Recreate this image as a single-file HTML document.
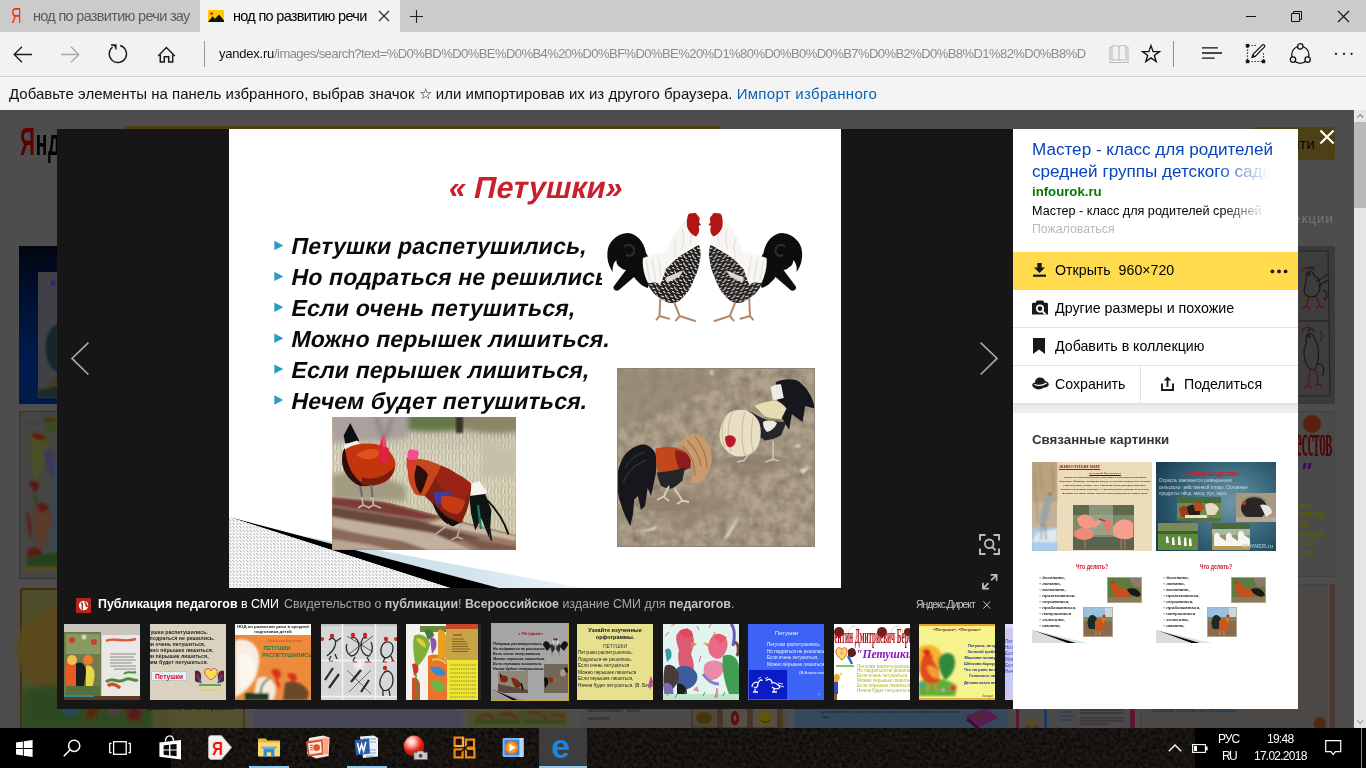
<!DOCTYPE html>
<html lang="ru">
<head>
<meta charset="utf-8">
<title>нод по развитию речи</title>
<style>
*{box-sizing:border-box;margin:0;padding:0}
html,body{width:1366px;height:768px;overflow:hidden;background:#4d4d4d}
body{position:relative;font-family:"Liberation Sans",sans-serif;color:#000}
.abs{position:absolute}
body>div,body>.t{will-change:transform}
.t{position:absolute;white-space:nowrap;line-height:1}
svg{position:absolute;overflow:visible}
/* ---------- browser chrome ---------- */
#tabbar{left:0;top:0;width:1366px;height:32px;background:#cbcbcb}
#tabactive{left:200px;top:0;width:200px;height:32px;background:#f2f2f2}
#navbar{left:0;top:32px;width:1366px;height:44px;background:#f2f2f2}
#favbar{left:0;top:76px;width:1366px;height:34px;background:#f4f4f4;border-top:1px solid #d2d2d2}
/* ---------- page ---------- */
#page{left:0;top:110px;width:1354px;height:618px;background:#4d4d4d;overflow:hidden}
#scroll{left:1354px;top:110px;width:12px;height:618px;background:#e6e6e6}
#thumb{left:1354px;top:122px;width:12px;height:86px;background:#bababa}
/* ---------- modal ---------- */
#modal{left:57px;top:129px;width:956px;height:580px;background:#161616}
#side{left:1013px;top:129px;width:285px;height:580px;background:#fff}
#slide{left:229px;top:129px;width:612px;height:459px;background:#fff;overflow:hidden}
.sk{transform:skewX(-12deg);transform-origin:0 24px}
.th{width:76px;height:76px;overflow:hidden}
.rel{width:120px;height:86px;background:#fff;overflow:hidden}
.bl{color:#3aa0c4;font-style:normal}
/* ---------- taskbar ---------- */
#taskbar{left:0;top:728px;width:1366px;height:40px;background:#16120f}
</style>
</head>
<body>
<!-- ================= BROWSER CHROME ================= -->
<div id="tabbar" class="abs"></div>
<div id="tabactive" class="abs"></div>
<div id="navbar" class="abs"></div>
<div id="favbar" class="abs"></div>
<!--CHROME_START-->
<!-- tab 1 -->
<div class="t" style="left:11px;top:5px;font-size:22px;color:#ff2a00;transform:scaleX(.66);transform-origin:0 0">Я</div>
<div class="t" id="tab1t" style="left:33px;top:9px;font-size:14.5px;color:#5a5a5a;letter-spacing:-.7px">нод по развитию речи зау</div>
<!-- tab 2 favicon -->
<svg style="left:208px;top:10px" width="16" height="12" viewBox="0 0 16 12"><rect width="16" height="12" fill="#ffcc00"/><path d="M0 12 L4.5 6.2 L7 8.8 L11 4.5 L16 10.5 V12Z" fill="#111"/><circle cx="3.6" cy="3.4" r="1.5" fill="#e8201a"/></svg>
<div class="t" id="tab2t" style="left:233px;top:9px;font-size:14.5px;color:#000;letter-spacing:-.7px">нод по развитию речи</div>
<svg style="left:379px;top:11px" width="10" height="10" viewBox="0 0 10 10"><path d="M0 0L10 10M10 0L0 10" stroke="#222" stroke-width="1.1" fill="none"/></svg>
<svg style="left:410px;top:10px" width="13" height="13" viewBox="0 0 13 13"><path d="M6.5 0V13M0 6.5H13" stroke="#222" stroke-width="1.1" fill="none"/></svg>
<!-- window controls -->
<svg style="left:1246px;top:16px" width="10" height="2" viewBox="0 0 10 2"><path d="M0 .5H10" stroke="#111" stroke-width="1"/></svg>
<svg style="left:1291px;top:11px" width="11" height="11" viewBox="0 0 11 11"><path d="M.5 2.5H8.5V10.5H.5Z M2.5 2.5V.5H10.5V8.5H8.5" stroke="#111" stroke-width="1" fill="none"/></svg>
<svg style="left:1338px;top:11px" width="11" height="11" viewBox="0 0 11 11"><path d="M0 0L11 11M11 0L0 11" stroke="#111" stroke-width="1.1" fill="none"/></svg>
<!-- nav icons -->
<svg style="left:13px;top:46px" width="20" height="17" viewBox="0 0 20 17"><path d="M19 8.5H1.2M9 .7L1.2 8.5L9 16.3" stroke="#1a1a1a" stroke-width="1.3" fill="none"/></svg>
<svg style="left:60px;top:46px" width="20" height="17" viewBox="0 0 20 17"><path d="M1 8.5H18.8M11 .7L18.8 8.5L11 16.3" stroke="#a8a8a8" stroke-width="1.3" fill="none"/></svg>
<svg style="left:108px;top:44px" width="20" height="20" viewBox="0 0 20 20"><path d="M12.2 1.5A8.65 8.65 0 1 1 4.6 3" stroke="#1a1a1a" stroke-width="1.35" fill="none"/><path d="M3 1H7.9V5.6" stroke="#1a1a1a" stroke-width="1.3" fill="none"/><path d="M4.6 1H7.9V4.2Z" fill="#1a1a1a"/></svg>
<svg style="left:157px;top:46px" width="19" height="17" viewBox="0 0 19 17"><path d="M1.1 9.9L9.4 1.4L17.8 9.9" stroke="#1a1a1a" stroke-width="1.4" fill="none"/><path d="M3.3 8.4V16H7.3V10.7H11.7V16H15.7V8.4" stroke="#1a1a1a" stroke-width="1.5" fill="none"/></svg>
<div class="abs" style="left:204px;top:41px;width:1px;height:26px;background:#9a9a9a"></div>
<!-- url -->
<div class="abs" style="left:218px;top:44px;width:872px;height:22px;overflow:hidden"><div class="t" style="left:1px;top:3px;font-size:13px;color:#111;letter-spacing:-.23px">yandex.ru<span style="color:#8b8b8b;letter-spacing:-.56px">/images/search?text=%D0%BD%D0%BE%D0%B4%20%D0%BF%D0%BE%20%D1%80%D0%B0%D0%B7%D0%B2%D0%B8%D1%82%D0%B8%D</span></div></div>
<!-- reading view -->
<svg style="left:1109px;top:45px" width="20" height="19" viewBox="0 0 20 19"><path d="M1 2.5H3V15H9.5C9.8 15 10 15.3 10 15.6C10 15.3 10.2 15 10.5 15H17V2.5H19V17.5H1Z" stroke="#bdbdbd" stroke-width="1.1" fill="none"/><path d="M3 2.5V.8H8C9.2 .8 10 1.6 10 2.8C10 1.6 10.8 .8 12 .8H17V2.5M10 2.8V15.4" stroke="#bdbdbd" stroke-width="1.1" fill="none"/></svg>
<!-- star -->
<svg style="left:1141px;top:44px" width="20" height="20" viewBox="0 0 20 20"><path d="M10 1.6L12.1 7.6H18.4L13.3 11.4L15.2 17.6L10 13.9L4.8 17.6L6.7 11.4L1.6 7.6H7.9Z" stroke="#111" stroke-width="1.35" fill="none" stroke-linejoin="miter"/></svg>
<div class="abs" style="left:1173px;top:41px;width:1px;height:26px;background:#8e8e8e"></div>
<!-- hub -->
<svg style="left:1202px;top:47px" width="21" height="12" viewBox="0 0 21 12"><path d="M0 .8H16M0 6H20M0 11.2H12.6" stroke="#111" stroke-width="1.3"/></svg>
<!-- web note -->
<svg style="left:1245px;top:43px" width="21" height="21" viewBox="0 0 21 21"><path d="M2.5 3.5V17.5M3.5 18.5H17.5M18.5 17.5V9.5M3.5 2.5H11" stroke="#111" stroke-width="1.2" stroke-dasharray="1.3 1.7" fill="none"/><rect x=".8" y="1" width="3.4" height="3.4" fill="#111"/><rect x=".8" y="16.8" width="3.4" height="3.4" fill="#111"/><rect x="16.8" y="16.8" width="3.4" height="3.4" fill="#111"/><path d="M7.2 14.2L8 11.3L17.2 2.1C17.8 1.5 18.7 1.5 19.3 2.1C19.9 2.7 19.9 3.6 19.3 4.2L10.1 13.4Z" stroke="#111" stroke-width="1.2" fill="#f2f2f2"/><path d="M6.2 15.2L8 11.3L10.1 13.4Z" fill="#111"/></svg>
<!-- share -->
<svg style="left:1289px;top:43px" width="23" height="22" viewBox="0 0 23 22"><circle cx="11.3" cy="11.7" r="8.6" stroke="#111" stroke-width="1.3" fill="none"/><circle cx="11.3" cy="3.4" r="2.7" stroke="#111" stroke-width="1.3" fill="#f2f2f2"/><circle cx="4" cy="16.6" r="2.7" stroke="#111" stroke-width="1.3" fill="#f2f2f2"/><circle cx="18.6" cy="16.6" r="2.7" stroke="#111" stroke-width="1.3" fill="#f2f2f2"/></svg>
<!-- more -->
<svg style="left:1334px;top:52px" width="20" height="4" viewBox="0 0 20 4"><circle cx="2" cy="1.8" r="1.15" fill="#111"/><circle cx="10" cy="1.8" r="1.15" fill="#111"/><circle cx="17.6" cy="1.8" r="1.15" fill="#111"/></svg>
<!-- favbar text -->
<div class="t" style="left:9px;top:86px;font-size:15px;color:#111">Добавьте элементы на панель избранного, выбрав значок ☆ или импортировав их из другого браузера. <span style="color:#0a63b6;letter-spacing:.3px">Импорт избранного</span></div>
<!--CHROME_END-->

<!-- ================= PAGE ================= -->
<div id="page" class="abs">
<!--PAGEBG_START-->
<!-- coordinates inside #page are page coords minus (0,110); colours are already dimmed -->
<div class="t" style="left:19.5px;top:10px;font:bold 39px 'Liberation Sans',sans-serif;transform:scaleX(.53);transform-origin:0 0;letter-spacing:1.5px"><span style="color:#5c0000">Я</span><span style="color:#000;font-size:36px">ндекс</span></div>
<div class="abs" style="left:124px;top:16px;width:596px;height:34px;border:3px solid #4c4014;background:#4d4d4d"></div>
<div class="abs" style="left:1253px;top:16.5px;width:82px;height:33.5px;background:#4c4116;border-radius:3px"></div>
<div class="t" style="left:1272px;top:26px;font-size:15px;color:#0a0800">Найти</div>
<div class="t" style="left:1259px;top:102px;font-size:13px;color:#767676;letter-spacing:1.15px">Коллекции</div>
<!-- left column image 1 -->
<div class="abs" style="left:19px;top:136px;width:200px;height:158px;background:linear-gradient(#03060f,#00102f 30%,#001a4c 70%,#001a4a)"></div>
<div class="abs" style="left:38px;top:162px;width:160px;height:126px;background:#3f4147"></div>
<svg style="left:38px;top:162px" width="20" height="126" viewBox="0 0 20 126"><g filter="url(#b2)"><path d="M20 52C12 54 6 66 8 82C10 92 14 98 20 100Z" fill="#15282a"/><path d="M20 106C14 106 10 112 8 116L20 118Z" fill="#4a3a1a"/><path d="M0 118L20 114V126H0Z" fill="#1c2c2c"/></g><path d="M12 9L18 13M12 13L18 9M15 7.5V14.5" stroke="#1c1c8a" stroke-width="1"/></svg>
<!-- left column image 2 -->
<div class="abs" style="left:19px;top:301px;width:200px;height:168px;background:#454544;border:1px solid #353535"></div>
<svg style="left:19px;top:301px" width="40" height="168" viewBox="0 0 40 168"><g filter="url(#b2)"><path d="M24 8C28 4 34 6 38 4V20C32 24 26 18 24 8Z" fill="#3a4a22"/><path d="M26 10C30 8 34 10 36 8" stroke="#5a1a10" stroke-width="2.4" fill="none"/><path d="M12 24C18 18 28 22 30 30C30 44 24 60 16 72C14 58 10 40 12 24Z" fill="#4a5028"/><path d="M12 24C16 20 24 22 28 28C22 30 16 30 12 24Z" fill="#5c1c10"/><path d="M24 40C30 36 36 40 38 50V70C30 66 26 54 24 40Z" fill="#3c3a52"/><path d="M10 72C14 68 20 70 20 76L16 82Z" fill="#5a1410"/><path d="M16 84L18 100" stroke="#2a3a1a" stroke-width="1.6"/><path d="M16 96C22 90 30 94 32 102C32 116 28 130 22 140C16 132 12 112 16 96Z" fill="#5a3a2a"/><path d="M18 94C22 90 28 92 30 98L22 102Z" fill="#5e1812"/><path d="M8 100C12 104 14 116 12 130C10 120 6 110 8 100Z" fill="#5a2418"/><path d="M30 100C34 104 36 116 34 130" stroke="#5a3a1a" stroke-width="2" fill="none"/><path d="M8 140C14 134 22 136 24 144L10 150Z" fill="#5a1a14"/><path d="M8 148C18 142 30 144 40 140V156H8Z" fill="#26421e"/><path d="M6 156H40V160H6Z" fill="#5a4a20"/><path d="M36 50V140" stroke="#2a4a6a" stroke-width="3"/></g><path d="M8 12L12 10M14 14L20 12" stroke="#2e2e2e" stroke-width=".7"/></svg>
<!-- left column image 3 -->
<div class="abs" style="left:20px;top:478px;width:225px;height:150px;background:#4f4e2c;border:2px solid #452a0c;border-radius:3px"></div>
<svg style="left:22px;top:480px" width="221" height="140" viewBox="0 0 221 140"><g filter="url(#b3)"><ellipse cx="40" cy="60" rx="46" ry="42" fill="#5a4a1c"/><path d="M0 100C30 90 90 96 130 112V140H0Z" fill="#2e4a20"/><circle cx="48" cy="118" r="7" fill="#244a6a"/><circle cx="112" cy="124" r="8" fill="#5a141c"/><circle cx="92" cy="120" r="5" fill="#5a3a4a"/><path d="M66 96C76 92 84 100 82 112L72 130H64Z" fill="#5a2410"/><path d="M150 10H221V140H150Z" fill="#52512f"/></g></svg>
<div class="t" style="left:147px;top:593.5px;font:bold 7px 'Liberation Serif',serif;color:#0c0c5a;filter:blur(.4px)">данном случае не перышек</div>
<!-- middle strip below modal -->
<div class="abs" style="left:253px;top:478px;width:208px;height:150px;background:#48475a"></div>
<div class="abs" style="left:468px;top:478px;width:102px;height:150px;background:#4f4e34"></div>
<svg style="left:470px;top:596px" width="100" height="22" viewBox="0 0 100 22"><g filter="url(#b2)"><path d="M4 10C20 4 40 8 50 6C66 2 84 8 96 6V18H4Z" fill="#4a4a2a"/><path d="M8 12C14 6 22 8 24 14M30 10C36 4 44 8 46 14M60 8C66 4 74 8 76 14M82 10C86 6 92 8 94 12" stroke="#5a2a14" stroke-width="2.4" fill="none"/><path d="M4 16H96" stroke="#2e4a1e" stroke-width="3"/><circle cx="52" cy="17" r="2.2" fill="#2a6a2a"/></g></svg>
<div class="abs" style="left:578px;top:478px;width:210px;height:150px;background:#4c4a48"></div>
<div class="t" style="left:588px;top:596px;font:5.5px/8px 'Liberation Sans',sans-serif;color:#242424;filter:blur(.4px)">воспринимает такое<br>явление.</div>
<div class="abs" style="left:693px;top:596px;width:90px;height:32px;background:#4a3826"></div>
<svg style="left:692px;top:598px" width="92" height="22" viewBox="0 0 92 22"><g filter="url(#b1)"><rect x="0" y="0" width="26" height="20" fill="#4f4a3a" stroke="#3a2a1a" stroke-width="1"/><ellipse cx="12" cy="10" rx="8" ry="6" fill="#4a3410"/><rect x="30" y="0" width="26" height="20" fill="#554e46" stroke="#3a2a1a" stroke-width="1"/><path d="M43 3C48 3 49 17 43 17C37 17 38 3 43 3Z M43 7C41 7 41 13 43 13C45 13 45 7 43 7Z" fill="#5a0808" fill-rule="evenodd"/><rect x="60" y="0" width="26" height="20" fill="#554e46" stroke="#3a2a1a" stroke-width="1"/><circle cx="73" cy="10" r="7.5" fill="#5e5410"/><path d="M69 12C71 15 75 15 77 12" stroke="#2a2408" stroke-width="1" fill="none"/></g></svg>
<div class="abs" style="left:794px;top:478px;width:226px;height:150px;background:#35475a"></div>
<div class="t" style="left:821px;top:593px;font:4.3px/5.6px 'Liberation Sans',sans-serif;color:#16202a;filter:blur(.35px)">звучит на прогулке, на природе, во время игр. Важно делать это от<br>для обучения «чтецов» случая к случаю, а систематически в течение<br>года.</div>
<svg style="left:962px;top:596px" width="40" height="26" viewBox="0 0 40 26"><g filter="url(#b1)"><path d="M4 10L24 2L36 12L16 22Z" fill="#5a1c52"/><path d="M6 12L18 22L16 24L4 14Z" fill="#3a0c34"/><path d="M12 10L22 6M14 13L26 8" stroke="#3a3a10" stroke-width="1.2"/></g></svg>
<!-- right column -->
<div class="abs" style="left:1140px;top:136px;width:195px;height:158px;background:#3a3a3a"></div>
<svg style="left:1298px;top:136px" width="37" height="158" viewBox="0 0 37 158"><rect x="0" y="4" width="31" height="150" fill="#3d3d3d"/><path d="M0 5H30L32 150H0M0 75H31" stroke="#222" stroke-width="1" fill="none"/><g filter="url(#b1)" fill="none" stroke="#171717" stroke-width="1.1"><path d="M8 30C8 24 16 24 16 30C22 32 24 40 20 48C16 52 8 52 6 46C6 40 10 34 8 30Z"/><path d="M18 36L30 28M20 40L30 34M24 44C30 44 30 52 26 54"/><path d="M10 24C10 20 16 20 16 24"/><circle cx="11" cy="28" r="1.2"/><path d="M8 92C8 86 16 86 16 92C22 98 22 118 16 124C10 124 6 116 6 106C6 100 10 96 8 92Z"/><path d="M18 118C24 116 28 122 24 130"/><path d="M10 86C10 82 16 82 16 86"/><circle cx="11" cy="90" r="1.2"/><path d="M22 84L24 90L22 96" stroke-width=".8"/></g><g filter="url(#b1)" stroke="#5a1010" stroke-width="1.1" fill="none"><path d="M4 26C6 20 12 20 14 24"/><path d="M4 86C6 80 12 80 14 84"/><path d="M12 50L8 60L4 62M8 60L12 63M18 50L22 60L18 62M22 60L26 62"/><path d="M12 124L10 140L6 142M10 140L14 142M18 124L20 138L16 140M20 138L24 140"/></g></svg>
<div class="abs" style="left:1140px;top:301px;width:195px;height:166px;background:#4a4a4a;border:1px solid #424242"></div>
<svg style="left:1298px;top:301px" width="37" height="120" viewBox="0 0 37 120"><g filter="url(#b1)"><circle cx="14" cy="13" r="9" fill="#5a2408"/></g></svg>
<div class="t" style="left:1296px;top:304px;font:bold 46px 'Liberation Serif',serif;color:#4c0606;transform:scaleX(.29);transform-origin:0 0;letter-spacing:-1px;filter:blur(.5px)">есстов</div>
<div class="t" style="left:1300px;top:348px;font:italic bold 24px 'Liberation Sans',sans-serif;color:#3c0c58;filter:blur(.5px)">"</div>
<div class="t" style="left:1299px;top:390.5px;font:bold 8.6px/9.7px 'Liberation Sans',sans-serif;color:#5a5a0c;filter:blur(.4px)">ись,<br>ились.<br>ся,<br>иться.<br>ься,<br>ься.</div>
<div class="abs" style="left:1140px;top:474px;width:195px;height:160px;background:#4c4846;border:1px solid #454140"></div>
<div class="abs" style="left:1329px;top:474px;width:6px;height:160px;background:#4d3b33"></div><div class="abs" style="left:1327.5px;top:474px;width:1px;height:160px;background:#565150"></div>
<svg style="left:1298px;top:596px" width="37" height="24" viewBox="0 0 37 24"><circle cx="21.8" cy="17.5" r="6.2" fill="#4f2a10"/></svg>
<div class="abs" style="left:1030px;top:478px;width:104px;height:150px;background:#4b4a49"></div>
<svg style="left:1008px;top:598px" width="130" height="30" viewBox="0 0 130 30"><g filter="url(#b1)"><rect x="0" y="0" width="120" height="30" fill="#4c4a48"/><rect x="8" y="0" width="3" height="30" fill="#5a1434"/><rect x="122" y="0" width="5" height="30" fill="#5a1434"/><rect x="36" y="0" width="3" height="30" fill="#1a3a5a"/><circle cx="24" cy="24" r="8" fill="#4f3c14"/><circle cx="24" cy="14" r="5" fill="#55482a"/><ellipse cx="50" cy="26" rx="12" ry="7" fill="#5a3a44"/><path d="M52 4H64M50 8H66M52 12H64" stroke="#1a3a5a" stroke-width="1"/><path d="M72 2H116M72 5H116M72 10H116M72 13H116M72 16H100" stroke="#262626" stroke-width=".8"/></g></svg>
<div class="t" style="left:1152.5px;top:596px;font:7px 'Liberation Serif',serif;color:#0e3350;filter:blur(.4px)">данном случае без перышек</div>
<!--PAGEBG_END-->
</div>
<div id="scroll" class="abs"></div>
<div id="thumb" class="abs"></div>
<svg style="left:1354px;top:110px" width="12" height="618" viewBox="0 0 12 618"><path d="M3.2 7.6L6.2 4.6L9.2 7.6" stroke="#8a8a8a" stroke-width="1.3" fill="none"/><path d="M3.2 610.2L6.2 613.4L9.2 610.2" stroke="#9a9a9a" stroke-width="1.1" fill="none"/><path d="M.5 0V12" stroke="#f2f2f2" stroke-width="1"/></svg>

<!-- ================= MODAL ================= -->
<div id="modal" class="abs"></div>
<div id="slide" class="abs">
<!--SLIDE_START-->
<!-- coordinates inside #slide are page coords minus (229,129) -->
<div class="t sk" style="left:218px;top:41px;font:bold 30.7px 'Liberation Sans',sans-serif;color:#c8202c;transform-origin:0 28px">« Петушки»</div>
<div id="verse" class="abs" style="left:61px;top:102px;font:bold 23.1px/30.9px 'Liberation Sans',sans-serif;color:#0a0a0a;white-space:nowrap;letter-spacing:.15px">
<div class="sk">Петушки распетушились,</div>
<div class="sk">Но подраться не решились</div>
<div class="sk">Если очень петушиться,</div>
<div class="sk">Можно перышек лишиться.</div>
<div class="sk">Если перышек лишиться,</div>
<div class="sk">Нечем будет петушиться.</div>
</div>
<svg style="left:44.5px;top:111px" width="10" height="170" viewBox="0 0 10 170"><g fill="#2b9bc4"><path d="M.3 .8L9.3 5.5L.3 10.2Z"/><path d="M.3 31.7L9.3 36.4L.3 41.1Z"/><path d="M.3 62.6L9.3 67.3L.3 72Z"/><path d="M.3 93.5L9.3 98.2L.3 102.9Z"/><path d="M.3 124.4L9.3 129.1L.3 133.8Z"/><path d="M.3 155.3L9.3 160L.3 164.7Z"/></g></svg>
<!-- decorative wedge bottom-left -->
<svg style="left:0;top:380px" width="400" height="79" viewBox="0 0 400 79">
<defs><pattern id="hatch" width="3.4" height="3.4" patternUnits="userSpaceOnUse"><rect width="3.4" height="3.4" fill="#fbfbfb"/><path d="M.5 .4L2 2.2" stroke="#8c8c8c" stroke-width=".8" stroke-linecap="round"/></pattern>
<linearGradient id="lb" x1="0" y1="0" x2="1" y2="0"><stop offset="0" stop-color="#c5dbe8"/><stop offset=".6" stop-color="#d3e4ee"/><stop offset="1" stop-color="#eef5f9"/></linearGradient></defs>
<path d="M70 26.5L354 79H270Z" fill="url(#lb)"/>
<path d="M0 8L270 79H221Z" fill="#000"/>
<path d="M0 8L221 79H0Z" fill="url(#hatch)"/>
</svg>
<!--ROOSTERS_START-->
<div class="abs" style="left:372.7px;top:130px;width:4px;height:36px;background:#fff"></div>
<svg style="left:375px;top:74px" width="210" height="128" viewBox="0 0 210 128">
<defs><filter id="b1"><feGaussianBlur stdDeviation=".7"/></filter>
<pattern id="spk" width="9" height="8" patternUnits="userSpaceOnUse"><path d="M1 1.5L3 2.5M5.5 0L7 1.6M3.5 5L5.6 5.8M7.6 4L8.6 6M0 6.4L1.6 7.6" stroke="#e9e6e2" stroke-width="1.1" stroke-linecap="round"/></pattern></defs>
<rect width="210" height="128" fill="#fff"/>
<g filter="url(#b1)">
<path d="M42 50C40 38 32 30 23 30C12 31 4 40 3.6 48C2.5 56 5 64 9 69C8 64 10 59 12.4 57C12 60 14 63 16 64C18 66 20 67 22 67L10 83C8 86 12 89 15 87L30 74C34 80 40 84 44 85L48 60Z" fill="#0d0d0d"/>
<path d="M20 44C24 40 30 42 30 48C30 52 26 54 22 52" stroke="#2e2e2e" stroke-width="2" fill="none"/>
<path d="M44 58C50 54 56 56 60 55C70 50 84 46 95 42C97 48 97 52 96 56C95 64 93 70 91 74C88 82 85 88 81 92C77 97 73 100 68 100C64 100 60 98 56 95C50 92 46 86 44 81C42 76 42 66 44 58Z" fill="#262423"/>
<path d="M44 58C50 54 56 56 60 55C70 50 84 46 95 42C97 48 97 52 96 56C95 64 93 70 91 74C88 82 85 88 81 92C77 97 73 100 68 100C64 100 60 98 56 95C50 92 46 86 44 81C42 76 42 66 44 58Z" fill="url(#spk)"/>
<path d="M61.6 74.4L79.2 67.3L75.7 73.5L63.4 79.6Z" fill="#dcd6ce"/>
<path d="M84 15C90 14 94 18 94 24C95 30 95 36 94 42C88 46 80 50 72 56C68 60 64 64 62 66C60 72 58 78 56 82C52 78 48 80 44 80C40 72 38 62 39 55C46 52 56 50 63 48C66 36 74 22 84 15Z" fill="#f8f6f3"/>
<path d="M42 58C44 64 44 72 46 78M48 56C50 64 50 72 52 78M54 54C56 60 56 68 57 74M70 36C72 42 72 48 70 54M78 26C80 32 80 40 78 46M86 20C88 26 88 34 86 42" stroke="#e4e0da" stroke-width="1.2" fill="none"/>
<path d="M84 12C86 9 89 11 90 10C92 9 93 12 94 13C96 14 96 17 95 19L97 22L94.5 23C96 27 95 31 92 33.5C88 32 84 28 83 23C82.5 19 83 15 84 12Z" fill="#b01319"/>
<path d="M56.3 95.5L55.5 113L52.5 116.6M55.5 113L65 115.7M70.4 99.9L75.7 113L72 117.4M75.7 113L91 118" stroke="#b98668" stroke-width="2" fill="none" stroke-linecap="round"/>
</g>
<g transform="translate(201.5,0) scale(-1,1)" filter="url(#b1)">
<path d="M42 50C40 38 32 30 23 30C12 31 4 40 3.6 48C2.5 56 5 64 9 69C8 64 10 59 12.4 57C12 60 14 63 16 64C18 66 20 67 22 67L10 83C8 86 12 89 15 87L30 74C34 80 40 84 44 85L48 60Z" fill="#0d0d0d"/>
<path d="M20 44C24 40 30 42 30 48C30 52 26 54 22 52" stroke="#2e2e2e" stroke-width="2" fill="none"/>
<path d="M44 58C50 54 56 56 60 55C70 50 84 46 95 42C97 48 97 52 96 56C95 64 93 70 91 74C88 82 85 88 81 92C77 97 73 100 68 100C64 100 60 98 56 95C50 92 46 86 44 81C42 76 42 66 44 58Z" fill="#262423"/>
<path d="M44 58C50 54 56 56 60 55C70 50 84 46 95 42C97 48 97 52 96 56C95 64 93 70 91 74C88 82 85 88 81 92C77 97 73 100 68 100C64 100 60 98 56 95C50 92 46 86 44 81C42 76 42 66 44 58Z" fill="url(#spk)"/>
<path d="M61.6 74.4L79.2 67.3L75.7 73.5L63.4 79.6Z" fill="#dcd6ce"/>
<path d="M84 15C90 14 94 18 94 24C95 30 95 36 94 42C88 46 80 50 72 56C68 60 64 64 62 66C60 72 58 78 56 82C52 78 48 80 44 80C40 72 38 62 39 55C46 52 56 50 63 48C66 36 74 22 84 15Z" fill="#f8f6f3"/>
<path d="M42 58C44 64 44 72 46 78M48 56C50 64 50 72 52 78M54 54C56 60 56 68 57 74M70 36C72 42 72 48 70 54M78 26C80 32 80 40 78 46M86 20C88 26 88 34 86 42" stroke="#e4e0da" stroke-width="1.2" fill="none"/>
<path d="M84 12C86 9 89 11 90 10C92 9 93 12 94 13C96 14 96 17 95 19L97 22L94.5 23C96 27 95 31 92 33.5C88 32 84 28 83 23C82.5 19 83 15 84 12Z" fill="#b01319"/>
<path d="M56.3 95.5L55.5 113L52.5 116.6M55.5 113L65 115.7M70.4 99.9L75.7 113L72 117.4M75.7 113L91 118" stroke="#b98668" stroke-width="2" fill="none" stroke-linecap="round"/>
</g>
</svg>
<!--ROOSTERS_END-->
<!--PHOTO1_START-->
<svg style="left:103px;top:288px" width="184" height="133" viewBox="0 0 184 133">
<defs>
<filter id="b2" x="-10%" y="-10%" width="120%" height="120%"><feGaussianBlur stdDeviation="1.1"/></filter>
<filter id="b3" x="-10%" y="-10%" width="120%" height="120%"><feGaussianBlur stdDeviation="2.4"/></filter>
<linearGradient id="grass" x1="0" y1="0" x2="0" y2="1"><stop offset="0" stop-color="#bdb7a6"/><stop offset=".3" stop-color="#d8d2bc"/><stop offset="1" stop-color="#cfc9a6"/></linearGradient>
<pattern id="grs" width="7" height="11" patternUnits="userSpaceOnUse"><path d="M1 11L2.4 0M4.5 11L5.2 3" stroke="#8d8870" stroke-width=".8" opacity=".5"/><path d="M3 11L3.4 5" stroke="#f2eede" stroke-width=".8" opacity=".7"/></pattern>
<clipPath id="c1"><rect width="184" height="133"/></clipPath>
</defs>
<g clip-path="url(#c1)">
<rect width="184" height="133" fill="url(#grass)"/>
<rect width="184" height="133" fill="url(#grs)"/>
<g filter="url(#b3)">
<path d="M76 -4H130V12C110 16 92 15 76 13Z" fill="#66784a"/>
<path d="M130 -4H188V14C170 18 148 16 130 12Z" fill="#8b8668"/>
<path d="M0 -4H76V20C50 26 24 22 0 26Z" fill="#aaa09c"/>
<path d="M44 0L52 24M60 0L54 20" stroke="#6a5e58" stroke-width="2"/>
<path d="M0 58C20 52 56 58 74 70L74 84L0 82Z" fill="#a39a82"/>
<path d="M150 20C160 30 176 34 184 30V60H150Z" fill="#c5bfa8"/>
</g>
<path d="M124 0H131V16H124Z" fill="#34332a" filter="url(#b2)"/>
<!-- platform -->
<path d="M0 80L58 86L184 118V133H0Z" fill="#9a7a68"/>
<g filter="url(#b2)">
<path d="M0 81L50 85L110 101L90 102L0 88Z" fill="#7c3a34"/>
<path d="M0 90L84 103L150 122L120 124L0 99Z" fill="#6a483c"/>
<path d="M0 100L100 116L140 133H96L0 110Z" fill="#c2b09e"/>
<path d="M0 112L70 124L96 133H0Z" fill="#8a6a58"/>
<path d="M0 122L40 128L60 133H0Z" fill="#b9a694"/>
<path d="M96 106L184 124V119L112 102Z" fill="#cbbba6"/>
<path d="M120 118L184 130V133H150Z" fill="#7a5a4a"/>
</g>
<!-- rooster A -->
<g filter="url(#b1)">
<path d="M18.2 6L27.2 23.6L22.2 28L13.1 26L11.7 18.6Z" fill="#101012"/>
<path d="M12.1 27.6L25.2 23.6L29 29L16.1 36.5L10.6 35Z" fill="#f4f1ea"/>
<path d="M14.1 31.7C22 27 30 26 38.3 26.6C46 27 52 29 56 33C61 38 64 44 63.5 48C63 54 61 58 58 61C54 65 50 67 46.4 67.5C40 69 34 69.5 28.2 69C22 66 17 62 14.1 56.9C11 52 10 46 10.1 42.8C10.5 38 12 34 14.1 31.7Z" fill="#c2360f"/>
<path d="M10.1 42.8C10 36 11 33 13 31C14 40 16 50 22 58C26 64 32 68 38 69L28.2 69C22 66 17 62 14.1 56.9C11 52 10 46 10.1 42.8Z" fill="#2e0f0a"/>
<path d="M24 38C30 32 42 30 50 34C46 42 36 46 24 38Z" fill="#e0521a"/>
<path d="M30 60C40 64 54 60 62 50C62 56 58 62 52 65C46 68 38 70 30 68Z" fill="#7a1c0e"/>
<path d="M49.4 22L52.6 18.6L54.5 30L57 32L56.5 44L52 47L47.5 44L46.4 34Z" fill="#e0203c"/>
<path d="M50 19L52.6 17.6L54 30L51 30Z" fill="#f04a6a"/>
<path d="M28.2 69L31 88L26 91M31 88L38 91M39.3 68L41.4 88L36 91M41.4 88L49 91" stroke="#b9b9b6" stroke-width="1.7" fill="none"/>
<path d="M28.2 69L30 80M39.3 68L40.6 80" stroke="#6a6a6a" stroke-width="2.2" fill="none"/>
</g>
<!-- rooster B -->
<g filter="url(#b1)">
<path d="M133.1 69L147.3 63.9L155.3 75L141.2 84L135.2 79.1Z" fill="#f5f3ee"/>
<path d="M137.2 79.1L153.3 77.1L159.4 93.2L157.4 121.4L149.3 101.3L143.2 113.4L139.2 97.2Z" fill="#101816"/>
<path d="M146 88L149 112" stroke="#1d7a56" stroke-width="2.2"/>
<path d="M155.3 83.1C164 92 172 104 176.5 117.4" stroke="#121212" stroke-width="1.9" fill="none"/>
<path d="M151.3 89.2C156 100 158 112 159.4 123.5" stroke="#121212" stroke-width="1.6" fill="none"/>
<path d="M92 52C104 50 122 56 139.2 67C139 80 136 94 130 104L121 109.3C112 104 104 94 100 86L92.8 79.1Z" fill="#7e2010"/>
<path d="M100.9 46.8C110 48 118 52 125.1 56.9C131 60 136 63 139.2 67C138 74 136 79 133.1 83.1C128 84 122 81 117 77.1C112 74 108 70 104.9 65Z" fill="#9a2012"/>
<path d="M76.7 42.8C82 41 88 41.5 92.8 42.8C98 44 104 46 108.9 48.8C107 54 104 60 100.9 65C98 70 96 75 92.8 79.1C89 79 86 78.5 82.7 77.1C80 72 78 68 76.7 62.9C75.5 56 75.5 48 76.7 42.8Z" fill="#c6461a"/>
<path d="M84.7 48C90 50 94 54 96 58C94 64 92 70 88.7 77C84 72 82 64 82.7 56Z" fill="#2e0e08"/>
<path d="M100.9 75L117 75L122 82L117 88L104 87Z" fill="#3a3aa0"/>
<path d="M108.9 79C116 78 126 80 133.1 84C132 90 130 94 126 97.2C120 97 114 94 110 90Z" fill="#c63a18"/>
<path d="M100.9 85.1C106 92 112 98 117 101.3C121 103 125 104.5 129.1 105.3L121 109.3C116 108 112 105 108.9 101.3C104 96 102 90 100.9 85.1Z" fill="#170e0e"/>
<path d="M126 97C130 99 132 102 130 106L124 104Z" fill="#8a1c10"/>
<path d="M74.6 40.8L82.7 40.8L82 52L77 55L74.6 50Z" fill="#d83a2a"/>
<path d="M75.6 36C76 32 80 31.5 82 33.5C84 32 87 34 86.7 38L85 42.8L76 42.8Z" fill="#f2508c"/>
<path d="M117 107.3L101 119L96 120M129.1 107.3L125.1 120L119 123M125.1 120L131 122" stroke="#b0aaa4" stroke-width="1.7" fill="none"/>
</g>
</g>
</svg>
<!--PHOTO1_END-->
<!--PHOTO2_START-->
<svg style="left:388px;top:239px" width="198" height="179" viewBox="0 0 198 179">
<defs>
<clipPath id="c2"><rect width="198" height="179"/></clipPath>
<filter id="nz" x="0" y="0" width="100%" height="100%" color-interpolation-filters="sRGB"><feTurbulence type="fractalNoise" baseFrequency=".09" numOctaves="3" seed="4"/><feColorMatrix values="0 0 0 0 .35  0 0 0 0 .3  0 0 0 0 .24  .8 .3 0 0 -.4"/></filter>
</defs>
<g clip-path="url(#c2)">
<rect width="198" height="179" fill="#b0a28c"/>
<rect width="198" height="179" filter="url(#nz)"/>
<g filter="url(#b3)">
<path d="M0 0H120L60 40L0 60Z" fill="#94866f" opacity=".7"/>
<path d="M20 130C60 118 100 122 120 140L60 160Z" fill="#8f806c" opacity=".6"/>
<path d="M110 90C130 84 160 88 170 100L120 110Z" fill="#8b7c68" opacity=".6"/>
</g>
<!-- rooster C (left) -->
<g filter="url(#b1)">
<ellipse cx="50" cy="136" rx="34" ry="7" fill="#8a7c68" opacity=".55"/>
<path d="M28 76.6C33 78 37 82 38.7 85.9C40 95 39.5 104 37.4 112.6L34 128L30.7 120L28 138L24 142L21 128L17.3 131.3L16 146L13.3 158C10 152 6 144 4 136.6C1 128 0 120 0 112.6C0 106 1.5 99 4 93.9C6 88 10 84 14.7 80.6C19 78 24 76 28 76.6Z" fill="#14151a"/>
<path d="M8 100C12 92 20 86 28 84M6 116C10 104 18 96 30 92" stroke="#2c2f36" stroke-width="1.4" fill="none"/>
<path d="M38.7 80.6C45 79 51 78.6 57.4 79.3C63 80.6 68 83 73.4 85.9L73.4 99.3L62.7 104.6C55 106 48 107 41.4 107.3C39.5 98 38.5 89 38.7 80.6Z" fill="#c4461a"/>
<path d="M58 82C64 82 70 85 74 90L73.4 100L64 104C60 98 58 90 58 82Z" fill="#8f1f1c"/>
<path d="M40 104.6C50 104 60 102 68 99.3L65.4 112.6C62 116 58 119 54.7 120.6C51 120.6 47 119.6 44 118C42 114 40.6 109 40 104.6Z" fill="#22262b"/>
<path d="M62.7 75.3C67 70 72 66.5 78.7 65.9C84 68 89 72 92 77.9C94 83 95 88 94.7 93.9C93 101 90 107 86.7 112.6C82 115 78 115.6 73.4 115.3C75 110 76 105 76 99.3C75 94 73 90 70.7 85.9C68 82 65 78 62.7 75.3Z" fill="#c89a6c"/>
<path d="M70 72C76 78 82 86 84 98M78 68C84 76 90 86 90 100M66 78C72 84 78 94 78 108" stroke="#a5764a" stroke-width="1.2" fill="none"/>
<path d="M52 118L46.7 128.6L40 132M46.7 128.6L52 133M57.4 120.6L65.4 132.6L72 134M65.4 132.6L60 136" stroke="#dccfc0" stroke-width="1.8" fill="none"/>
</g>
<!-- rooster D (right) -->
<g filter="url(#b1)">
<ellipse cx="140" cy="92" rx="30" ry="5" fill="#8a7c68" opacity=".5"/>
<path d="M158.8 13.9C166 11 174 10.5 180.1 12.5C186 16 190 21 193.5 27.2C196 32 197 36 197.5 40.6L188.2 37.9L185.5 53.9L174.8 45.9L172.1 61.9L164.1 48.6C161 38 159 26 158.8 13.9Z" fill="#15161b"/>
<path d="M153.5 19.2C157 17 161 16 164.1 16.5L166.8 29.9L156.1 32.6Z" fill="#ecebe8"/>
<path d="M132.1 43.2C138 46 143 49 148.1 51.2C155 53 162 54 169.5 53.9L164.1 67.3C159 70 154 72 148.1 72.6C144 70 140 67 137.4 64.6C135 58 133 50 132.1 43.2Z" fill="#26262b"/>
<path d="M137.4 37.9C144 35 152 33 158.8 32.6C163 34 167 37 169.5 40.6L164.1 51.2C158 51 153 50 148.1 48.6Z" fill="#e6dcb0"/>
<path d="M146 54C150 52 156 52 160 55C158 60 154 63 150 64C147 61 146 58 146 54Z" fill="#efeade"/>
<path d="M121.4 41.9C130 41 138 46 142 54C145 62 144 72 140 80C135 87 126 90 118 88C110 85 104 78 102.7 70C102 60 106 50 112 45C115 43 118 42 121.4 41.9Z" fill="#e7e0c6"/>
<path d="M108 50C104 58 104 70 108 80M116 44C110 54 110 70 114 84M128 44C124 56 124 74 128 88M136 50C134 60 134 74 136 84" stroke="#cbbf98" stroke-width="1.1" fill="none"/>
<path d="M108.1 69C112 66 117 67 118.8 71C119 76 116 79.3 112 79.3C109 78 108 73 108.1 69Z" fill="#b81f2c"/>
<path d="M156.1 72.6V91.3L148 94M156.1 91.3L162 93M132.1 85.9L126.8 92.6L120 94" stroke="#cdc3b8" stroke-width="1.7" fill="none"/>
</g>
<g filter="url(#b2)" fill="#e3dccf">
<path d="M120 150L124 144L112 168L106 172Z"/>
<path d="M176 78L184 76L182 80Z"/><path d="M182 102L194 98L186 106Z"/><path d="M22 164L40 158L38 162Z"/>
<path d="M92 4L96 2L96 8Z"/>
</g>
<rect x=".5" y=".5" width="197" height="178" fill="none" stroke="#8c8478" stroke-width="1"/>
</g>
</svg>
<!--PHOTO2_END-->
<!--SLIDE_END-->
</div>
<!--MODAL_START-->
<!-- arrows -->
<svg style="left:70px;top:341px" width="20" height="35" viewBox="0 0 20 35"><path d="M18.4 1.7L2 17.4L18.4 33.5" stroke="#a6a6a6" stroke-width="1.7" fill="none"/></svg>
<svg style="left:979px;top:341px" width="20" height="35" viewBox="0 0 20 35"><path d="M1.6 1.7L18 17.4L1.6 33.5" stroke="#a6a6a6" stroke-width="1.7" fill="none"/></svg>
<!-- search-in-image icon -->
<svg style="left:979px;top:534px" width="21" height="21" viewBox="0 0 21 21"><path d="M1 6.5V1H6.5M14.5 1H20V6.5M20 14.5V20H14.5M6.5 20H1V14.5" stroke="#bdbdbd" stroke-width="1.9" fill="none"/><circle cx="10.2" cy="9.8" r="4.3" stroke="#bdbdbd" stroke-width="1.8" fill="none"/><path d="M13.3 13L16.6 16.4" stroke="#bdbdbd" stroke-width="1.9"/></svg>
<!-- fullscreen icon -->
<svg style="left:982px;top:573.5px" width="15.5" height="15.5" viewBox="0 0 17 17"><path d="M9.5 1H16V7.5M16 1L10 7M7.5 16H1V9.5M1 16L7 10" stroke="#bdbdbd" stroke-width="1.9" fill="none"/></svg>
<!-- ad line -->
<svg style="left:76px;top:598px" width="15" height="15" viewBox="0 0 15 15"><rect width="15" height="15" fill="#b3261b"/><circle cx="7.6" cy="7.6" r="4.7" fill="#fff"/><path d="M5 4.6C6.2 5.4 7 6.2 6.4 7.4C5.6 8.4 6.6 9.6 6.2 11.4M9 3.6C8.4 5 10.4 5.6 10.2 7.2C10 8.6 11.4 8.8 11.8 7.4" stroke="#b3261b" stroke-width="1.5" fill="none"/></svg>
<div class="t" style="left:98px;top:598px;font-size:12.4px;color:#fff"><b>Публикация педагогов</b> в СМИ</div>
<div class="t" style="left:284px;top:598px;font-size:12.4px;color:#a8a8a8">Свидетельство о <b style="color:#c4c4c4">публикации</b>! <b style="color:#c4c4c4">Всероссийское</b> издание СМИ для <b style="color:#c4c4c4">педагогов</b>.</div>
<div class="t" style="left:915.5px;top:600px;font-size:10.3px;color:#c9c9c9;letter-spacing:-.95px">Яндекс.Директ</div>
<svg style="left:983px;top:601px" width="8" height="8" viewBox="0 0 8 8"><path d="M.4 .4L7.2 7.6M7.2 .4L.4 7.6" stroke="#c9c9c9" stroke-width="1" fill="none"/></svg>
<svg style="left:1319px;top:129px" width="16" height="16" viewBox="0 0 16 16"><path d="M1.4 1.4L14.6 14.6M14.6 1.4L1.4 14.6" stroke="#fff" stroke-width="2.1" fill="none"/></svg>
<!--THUMBS_START-->
<!-- thumb 1 : book photo -->
<svg style="left:64px;top:624px" width="76" height="76" viewBox="0 0 76 76"><defs><clipPath id="ct"><rect width="76" height="76"/></clipPath></defs><g clip-path="url(#ct)">
<rect width="76" height="76" fill="#c9c4be"/>
<rect x="0" y="8" width="37" height="64" fill="#6f7b4e"/>
<g filter="url(#b1)"><path d="M2 10H36V30H2Z" fill="#8a9a62"/><circle cx="8" cy="16" r="3" fill="#c8402a"/><circle cx="20" cy="13" r="2.5" fill="#d8d0c0"/><circle cx="30" cy="18" r="3" fill="#c8402a"/>
<path d="M2 38C6 34 12 36 13 44L12 66H2Z" fill="#e85a22"/><circle cx="8" cy="36" r="5" fill="#f0c050"/>
<path d="M12 40C16 36 22 40 22 48L20 62H12Z" fill="#1e1e1a"/>
<path d="M22 42C28 40 32 46 30 56L28 64H22Z" fill="#e8d848"/><circle cx="24" cy="36" r="5" fill="#f07a2a"/>
<path d="M2 62H36V72H2Z" fill="#55703a"/></g>
<rect x="38" y="11" width="38" height="61" fill="#e9e8e4"/>
<g filter="url(#b1)"><path d="M42 17C50 13 60 19 72 15" stroke="#d85a3a" stroke-width="2.4" fill="none"/><path d="M46 30H72M46 33H70M46 36H72M46 39H68M46 42H72M50 45H72" stroke="#8a8a88" stroke-width="1"/>
<path d="M42 58C48 52 54 60 60 56C66 52 70 58 74 56" stroke="#4d8a3a" stroke-width="3" fill="none"/><path d="M44 62C48 58 54 62 56 64" stroke="#d8482a" stroke-width="3.4" fill="none"/><path d="M60 50C64 46 68 50 72 48" stroke="#4d8a3a" stroke-width="2" fill="none"/></g>
<rect x="0" y="72" width="76" height="4" fill="#5b3b22"/><rect x="0" y="71" width="30" height="2" fill="#3a8a9a"/>
</g></svg>
<!-- thumb 2 : linen slide -->
<div class="abs th" style="left:150px;top:624px;background:#d9d2bf">
<div class="abs" style="left:-9px;top:5px;font:bold 5.3px/6.1px 'Liberation Sans',sans-serif;color:#262626;white-space:nowrap">Петушки распетушились.<br>Но подраться не решились.<br>Если очень петушиться,<br>Можно пёрышек лишиться.<br>Если пёрышек лишиться,<br>Нечем будет петушиться.</div>
<div class="abs" style="left:1px;top:47px;width:36px;height:10px;background:#e9f1f8;border:.5px solid #b9c6d2;font:bold 6.6px/9px 'Liberation Sans',sans-serif;color:#c41420;text-align:center">Петушки</div>
<svg style="left:43px;top:43px" width="33" height="28" viewBox="0 0 33 28"><g filter="url(#b1)"><path d="M12 3C15 0 18 2 18 4C18 2 22 0 24 3C26 7 21 11 18 13C15 11 10 7 12 3Z" fill="#f4e04a" stroke="#d84a6a" stroke-width="1"/><path d="M2 4C6 2 9 6 8 12L6 16L2 14Z" fill="#6a1a2a"/><path d="M31 4C27 2 24 6 25 12L27 16L31 14Z" fill="#6a1a2a"/><path d="M4 8L8 16" stroke="#2a5aa8" stroke-width="2"/><path d="M29 8L25 16" stroke="#2a5aa8" stroke-width="2"/><path d="M6 18H28" stroke="#6aa83a" stroke-width="2"/><path d="M8 23H26" stroke="#e8d020" stroke-width="1.6" stroke-dasharray="2 1.4"/></g></svg>
</div>
<!-- thumb 3 : book cover -->
<div class="abs th" style="left:235px;top:624px;background:#ee8a3c">
<div class="abs" style="left:0;top:0;width:76px;height:11px;background:#fdfdfb;font:bold 4.3px/5px 'Liberation Sans',sans-serif;color:#222;text-align:center;white-space:nowrap">НОД по развитию речи в средней<br>подготовка детей</div>
<svg style="left:0;top:11px" width="76" height="65" viewBox="0 0 76 65"><g filter="url(#b2)"><path d="M0 6C8 2 18 6 22 14C26 22 24 34 20 44C14 54 6 60 0 62Z" fill="#f6eee2"/><path d="M4 20C10 16 18 22 20 30C22 40 14 50 6 54Z" fill="#fbf6ee"/><path d="M22 44C28 40 36 42 40 50C42 56 40 62 38 65H18Z" fill="#f3eadc"/><path d="M36 36C40 32 46 34 46 40L42 46Z" fill="#d8301a"/><path d="M40 46C44 44 46 50 44 54Z" fill="#d8301a"/><path d="M52 40C56 36 62 38 62 44L58 48Z" fill="#d8301a"/><path d="M50 48C58 44 70 48 74 58L72 65H48Z" fill="#6a4a2a"/><path d="M26 65C24 54 28 46 34 44" stroke="#1a4a2a" stroke-width="1.6" fill="none"/><path d="M10 58H34V65H10Z" fill="#1c3a24"/></g></svg>
<div class="abs" style="left:33px;top:14px;font:italic 4px/5px 'Liberation Serif',serif;color:#b8501a;white-space:nowrap">Владимир Берестов</div>
<div class="abs" style="left:27px;top:21px;font:bold 5.6px/6.6px 'Liberation Sans',sans-serif;color:#2a7a40;white-space:nowrap;letter-spacing:-.1px">&nbsp;ПЕТУШКИ<br>РАСПЕТУШИЛИСЬ</div>
</div>
<!-- thumb 4 : drawings on whiteboard -->
<svg style="left:321px;top:624px" width="76" height="76" viewBox="0 0 76 76"><g clip-path="url(#ct)">
<rect width="76" height="76" fill="#d6d7d9"/><rect x="0" y="0" width="76" height="2" fill="#bfc0c2"/>
<path d="M21.5 0V76M54.5 0V76M0 36.5H76M0 72.5H76" stroke="#f3f3f3" stroke-width="1.4"/><circle cx="38" cy="41" r="5" fill="#f4f4f4" filter="url(#b3)"/>
<g filter="url(#b1)" fill="none" stroke="#2a2a2a" stroke-width="1.3"><path d="M8 16C12 12 16 16 14 22C12 28 8 30 6 32M14 18L20 14M10 32L8 36M14 30L16 35"/><path d="M30 14C34 12 38 16 38 22C38 28 34 32 30 32C26 30 24 24 26 20M46 14C42 12 40 16 40 22C40 28 44 32 48 32C52 28 52 22 50 18M34 33L32 37M46 33L48 37"/><path d="M26 12L52 28M52 12L28 30" stroke-width=".7"/><path d="M62 20C66 16 72 18 72 24C72 30 68 34 64 34C60 32 58 26 62 20M64 34L62 38M70 32L72 37"/><path d="M4 56L12 44M8 64L18 50" stroke-width="2.2"/><path d="M30 58L40 46M40 68L48 56" stroke-width="2.2"/><path d="M26 46L50 70M50 46L28 68" stroke-width=".6"/><path d="M62 50C66 44 72 48 72 56C72 64 66 68 62 66C58 62 58 56 62 50M62 66L62 72M68 66L69 72"/></g>
<g fill="#d4201a" filter="url(#b1)"><circle cx="11" cy="12" r="2.2"/><circle cx="32" cy="11" r="2.2"/><circle cx="44" cy="11" r="2.2"/><circle cx="65" cy="15" r="2.2"/><circle cx="64" cy="44" r="2.2"/><circle cx="75" cy="15" r="2"/><circle cx="1" cy="15" r="2"/><path d="M8 37H12M32 38H36M44 38H50M62 38H66M70 37H74" stroke="#d4201a" stroke-width="1.2"/></g>
</g></svg>
<!-- thumb 5 : colourful book -->
<svg style="left:406px;top:624px" width="75" height="76" viewBox="0 0 75 76"><g clip-path="url(#ct)">
<rect width="75" height="76" fill="#f3f2ee"/>
<g filter="url(#b1)"><path d="M14 2H62V8H14Z" fill="#6a8a3a"/><path d="M40 0H72V6H40Z" fill="#c8482a"/>
<path d="M8 12C14 8 22 12 24 20C22 30 16 38 10 44C8 34 6 22 8 12Z" fill="#7fae3a"/><path d="M10 14C16 14 20 18 20 24C16 22 12 20 10 14Z" fill="#e8c83a"/><path d="M6 40C10 38 14 42 12 48L8 52Z" fill="#c83a2a"/><path d="M18 6C22 4 28 6 28 12L22 16Z" fill="#4a7a3a"/><path d="M24 14C28 12 32 16 30 24L26 30Z" fill="#8a5aa8"/>
<path d="M22 32C30 28 40 32 42 40V76H22Z" fill="#e8762a"/><path d="M24 44C30 40 38 44 40 50C34 54 28 52 24 44Z" fill="#3a8ad0"/><path d="M24 58C30 54 38 58 40 64C34 70 28 68 24 58Z" fill="#6ab84a"/><path d="M26 36C32 34 38 36 40 40" stroke="#d8d03a" stroke-width="2" fill="none"/><path d="M6 54C10 52 14 56 14 62V76H6Z" fill="#c8522a"/><path d="M10 50V76" stroke="#5a8a3a" stroke-width="1.4"/>
<path d="M32 6C36 4 40 8 40 14V34H32Z" fill="#e8a020"/></g>
<rect x="40" y="5" width="32" height="31" fill="#c9a446"/><path d="M47 11H56" stroke="#b8301a" stroke-width="1.2"/><path d="M46 15H58M46 17.5H60M46 20H62M46 22.5H62M46 25H64M46 27.5H62" stroke="#6a5420" stroke-width=".8"/>
<rect x="41" y="36" width="31" height="40" fill="#efe534"/><path d="M44 41H70M44 45H70M44 49H70M44 53H70M44 57H70M44 61H70M44 65H70M44 69H70M44 73H70" stroke="#8a8420" stroke-width=".9" stroke-dasharray="1.4 .8"/>
<rect x="72" y="0" width="3" height="76" fill="#2a2622"/>
</g></svg>
<!-- thumb 6 : active (current slide, dimmed) -->
<div class="abs" style="left:491px;top:623px;width:78px;height:78px;background:#a6a6a6;border:1px solid #c9a32a;overflow:hidden">
<div class="abs" style="left:26px;top:7px;font:bold 4.4px/5px 'Liberation Sans',sans-serif;color:#8e1820;white-space:nowrap;transform:skewX(-12deg)">« Петушки»</div>
<div class="abs" style="left:1px;top:17.5px;font:italic bold 3.7px/5px 'Liberation Sans',sans-serif;color:#0c0c0c;white-space:nowrap">Петушки распетушились,<br>Но подраться не решились<br>Если очень петушиться,<br>Можно перышек лишиться.<br>Если перышек лишиться,<br>Нечем будет петушиться.</div>
<svg style="left:50px;top:13px" width="27" height="19" viewBox="0 0 27 19"><g filter="url(#b1)"><path d="M1 8C1 4 5 3 7 6L9 10L5 14Z" fill="#141414"/><path d="M8 8L12 6L13 12L10 16Z" fill="#2c2c2c"/><path d="M10 3C12 1 13 3 13 7L11 9Z" fill="#c8c4be"/><circle cx="12.4" cy="2.4" r="1.1" fill="#7e1418"/><path d="M26 8C26 4 22 3 20 6L18 10L22 14Z" fill="#141414"/><path d="M19 8L15 6L14 12L17 16Z" fill="#2c2c2c"/><path d="M17 3C15 1 14 3 14 7L16 9Z" fill="#c8c4be"/><circle cx="14.6" cy="2.4" r="1.1" fill="#7e1418"/><path d="M10 16V18.5M17 16V18.5" stroke="#7a5a4a" stroke-width=".7"/></g></svg>
<svg style="left:6px;top:47px" width="30" height="22" viewBox="0 0 30 22"><rect width="30" height="22" fill="#8b8779"/><path d="M0 13L30 19V22H0Z" fill="#5c483e"/><g filter="url(#b1)"><ellipse cx="6" cy="8" rx="4" ry="3.4" fill="#84270e"/><path d="M13 7C17 6 22 10 23 15L19 18L15 13Z" fill="#7c2a12"/><path d="M23 12L25 19" stroke="#111" stroke-width="1.6"/><path d="M2 2L4 5L2 7Z" fill="#111"/></g></svg>
<svg style="left:52px;top:40px" width="24" height="29" viewBox="0 0 24 29"><rect width="24" height="29" fill="#71675a"/><g filter="url(#b1)"><path d="M0 14C3 12 5 15 4 20L1 24Z" fill="#101114"/><path d="M4 14C7 12 10 14 10 17L6 19Z" fill="#84310f"/><ellipse cx="11" cy="16" rx="2" ry="3" fill="#8c6a48"/><ellipse cx="19" cy="9" rx="3" ry="3.4" fill="#a29c8a"/><path d="M20 4C22 2 24 4 24 8L22 9Z" fill="#15151a"/></g></svg>
<svg style="left:0;top:63px" width="40" height="14" viewBox="0 0 40 14"><path d="M0 2L36 14H26Z" fill="#8e9aa2"/><path d="M0 2L28 14H22Z" fill="#050505"/><path d="M0 2L22 14H0Z" fill="#9a9a9a"/></svg>
</div>
<!-- thumb 7 : yellow slide -->
<div class="abs th" style="left:577px;top:624px;background:#e7e18f">
<div class="abs" style="left:0;top:3px;width:76px;font:bold 5.6px/7px 'Liberation Sans',sans-serif;color:#111;text-align:center;white-space:nowrap">Узнайте изученные<br>орфограммы.</div>
<div class="abs" style="left:0;top:19px;width:76px;font:5px/6px 'Liberation Sans',sans-serif;color:#444;text-align:center">ПЕТУШКИ</div>
<div class="abs" style="left:1px;top:26px;font:4.7px/6.55px 'Liberation Sans',sans-serif;color:#1c1c1c;white-space:nowrap">Петушки распетушились.<br>Подраться не решились.<br>Если очень петушиться<br>Можно перышек лишиться<br>Если перышек лишиться,<br>Нечем будет петушиться. (В. Берестов)</div>
<svg style="left:72px;top:52px" width="4" height="14" viewBox="0 0 4 14"><path d="M2 0L4 6L1 14L0 6Z" fill="#c83aa8"/></svg>
</div>
<!-- thumb 8 : crayon roosters -->
<svg style="left:663px;top:624px" width="76" height="76" viewBox="0 0 76 76"><g clip-path="url(#ct)">
<rect width="76" height="76" fill="#e3f4f0"/>
<g filter="url(#b1)">
<path d="M14 10C18 4 26 6 30 12C32 18 30 24 28 30C30 36 32 42 30 48L20 50C16 44 14 34 16 26C14 20 12 14 14 10Z" fill="#dc5a72"/>
<path d="M16 8C18 4 22 6 24 4C26 6 30 6 30 12L22 14Z" fill="#e04a5a"/>
<path d="M28 18L34 20L28 24Z" fill="#d88a3a"/>
<path d="M14 44C20 40 30 42 34 50C36 58 30 64 22 66C14 64 8 56 14 44Z" fill="#3c5c9c"/>
<path d="M2 42C8 38 16 44 16 54C14 62 8 68 2 70C0 60 0 50 2 42Z" fill="#4a3a34"/>
<path d="M2 26C6 22 10 26 8 34L4 38Z" fill="#3a9aa8"/><path d="M0 60C6 56 12 62 10 72L2 76Z" fill="#7a6ab8"/>
<path d="M14 60C18 58 24 62 24 70L20 76H14Z" fill="#1c1c1c"/><path d="M22 68L26 76" stroke="#8a5a3a" stroke-width="1.6"/>
<path d="M48 14C52 8 60 10 64 16C66 24 62 30 58 34C54 36 48 34 46 28C44 22 46 18 48 14Z" fill="#e86a86"/>
<path d="M50 12C54 8 60 10 64 14L58 20Z" fill="#e85a6a"/><path d="M46 20L40 18L46 24Z" fill="#d88a3a"/>
<path d="M42 40C48 34 58 36 62 42C60 52 52 58 44 56C40 50 40 44 42 40Z" fill="#e88aa8"/><path d="M40 50C44 56 50 60 56 60" stroke="#8a7ac8" stroke-width="3" fill="none"/>
<path d="M60 32C68 28 76 34 76 44V70H66C62 60 58 44 60 32Z" fill="#3f9e52"/><path d="M68 0C72 4 72 14 70 22" stroke="#6a5ab8" stroke-width="3" fill="none"/><path d="M72 18C76 20 76 28 74 32" stroke="#6a4a3a" stroke-width="3" fill="none"/>
<path d="M0 70H76V76H0Z" fill="#bfe6c8"/><path d="M4 72L6 68M12 74L14 70M40 72L42 68M52 74L54 66M60 72L62 68" stroke="#4aa85a" stroke-width="1"/>
<path d="M30 66L34 62L36 68Z" fill="#e88a9a"/><path d="M54 64V74" stroke="#e87aa8" stroke-width="1.6"/>
<path d="M34 2L36 6M46 4L48 0M38 32L36 38M50 12L52 8" stroke="#e86a8a" stroke-width="1"/><path d="M8 2L12 0M2 12L6 8" stroke="#d8a86a" stroke-width="1.2"/>
</g></g></svg>
<!-- thumb 9 : blue slide -->
<div class="abs th" style="left:748px;top:624px;background:#3c62f6">
<div class="abs" style="left:27px;top:6px;font:5.8px/7px 'Liberation Sans',sans-serif;color:#eef2ff;white-space:nowrap">Петушки</div>
<div class="abs" style="left:19px;top:18px;font:4.6px/6.5px 'Liberation Sans',sans-serif;color:#eef2ff;white-space:nowrap">Петушки распетушились.<br>Но подраться не решились<br>Если очень петушиться,<br>Можно пёрышек лишиться</div>
<div class="abs" style="left:51px;top:46px;font:4.4px/6px 'Liberation Sans',sans-serif;color:#eef2ff;white-space:nowrap">(В.Берестов)</div>
<div class="abs" style="left:70px;top:69px;font:3.6px/5px 'Liberation Sans',sans-serif;color:#c8d4ff;white-space:nowrap">©</div>
<svg style="left:0;top:45px" width="40" height="31" viewBox="0 0 40 31"><rect width="40" height="31" fill="#0b1cc6"/><rect x=".3" y=".3" width="39.4" height="30.4" fill="none" stroke="#6f86e8" stroke-width=".6"/><g filter="url(#b1)" fill="none" stroke="#f2f4ff" stroke-width="1.3"><path d="M4 18C4 14 8 12 10 14C12 10 14 10 14 12M6 18C8 20 10 18 10 14M7 20V23M5 23H10"/><path d="M10 10L13 8M11 12L14 11" stroke-width=".9"/><path d="M18 12C20 9 24 10 24 14C26 13 30 15 32 18C30 21 26 20 24 18M26 20V23M24 23H29"/><path d="M17 10L20 8M30 14L35 15M30 16L36 18" stroke-width=".9"/></g></svg>
</div>
<!-- thumb 10 : white slide w/ decorative heading -->
<div class="abs th" style="left:834px;top:624px;background:#fff">
<svg style="left:0;top:2px" width="76" height="12" viewBox="0 0 76 12"><g filter="url(#b1)"><circle cx="5" cy="6" r="5" fill="#6a2414"/><circle cx="48" cy="6" r="5" fill="#6a2414"/><circle cx="74" cy="6" r="4" fill="#6a2414"/><circle cx="20" cy="6" r="5.5" fill="none" stroke="#c8a8a0" stroke-width=".5"/><circle cx="63" cy="6" r="5.5" fill="none" stroke="#c8a8a0" stroke-width=".5"/></g></svg>
<div class="abs" style="left:-12.3px;top:-1px;font:bold 21px/26px 'Liberation Serif',serif;color:#a80f16;white-space:nowrap;transform:scaleX(.336);transform-origin:0 0">Валентин Дмитриевич Берестов</div>
<div class="abs" style="left:22px;top:22px;font:italic bold 13.5px/16px 'Liberation Serif',serif;color:#8a12c4;white-space:nowrap;transform:scaleX(.86);transform-origin:0 0">"Петушки"</div>
<div class="abs" style="left:23px;top:40.5px;font:4.6px/4.9px 'Liberation Sans',sans-serif;color:#a9b418;white-space:nowrap">Петушки распетушились,<br>Но подраться не решились.<br>Если очень петушиться,<br>Можно пёрышек лишиться.<br>Если пёрышек лишиться,<br>Нечем будет петушиться.</div>
<svg style="left:0;top:22px" width="24" height="54" viewBox="0 0 24 54"><g filter="url(#b1)"><path d="M2 4C4 0 8 2 8 4C8 2 12 0 13 4C14 8 10 12 8 14C5 12 1 8 2 4Z" fill="#f4e24a" stroke="#e04a7a" stroke-width="1"/><circle cx="7.6" cy="7" r="2" fill="#f0a8a0"/><path d="M14 4C18 0 22 2 22 8C20 12 16 12 14 10Z" fill="#5a2418"/><path d="M14 10L18 18" stroke="#2a6ab8" stroke-width="2.4"/><path d="M2 20H20" stroke="#6ab83a" stroke-width="1.6"/><path d="M0 30C2 26 6 28 6 32L4 36H0Z" fill="#e8a83a"/><circle cx="7" cy="28" r="1.4" fill="#f0e03a"/><path d="M0 36H4V48H0Z" fill="#3a4ab8"/><path d="M0 48H3V54H0Z" fill="#8a5a2a"/></g></svg>
</div>
<!-- thumb 11 : yellow rooster card -->
<div class="abs th" style="left:919px;top:624px;background:#f6f28c">
<div class="abs" style="left:0;top:0;width:76px;height:2px;background:#e8a22a"></div>
<div class="abs" style="left:0;top:74px;width:76px;height:2px;background:#e8b23a"></div>
<div class="abs" style="left:0;top:3px;width:76px;font:bold 4.2px/6px 'Liberation Sans',sans-serif;color:#7a1a10;text-align:center;white-space:nowrap">«Петушок», «Петушок»</div>
<svg style="left:0;top:16px" width="40" height="58" viewBox="0 0 40 58"><g filter="url(#b2)"><circle cx="9" cy="20" r="15" fill="#f6b42a"/><path d="M0 42C10 36 28 38 38 46L36 56H0Z" fill="#5fae3a"/><path d="M20 18C26 10 36 12 36 22C36 30 32 36 26 40C22 34 18 26 20 18Z" fill="#2f8a3c"/><path d="M4 16C8 10 14 12 14 20C18 26 22 34 20 42C14 46 6 44 2 36C0 28 2 20 4 16Z" fill="#de4a22"/><path d="M8 26C14 24 20 30 20 38C14 40 8 34 8 26Z" fill="#f0a030"/><path d="M3 12C5 8 10 8 12 12L8 16Z" fill="#e0241a"/><path d="M10 44L8 52M16 44L18 52" stroke="#e8862a" stroke-width="1.6"/><circle cx="34" cy="48" r="3" fill="#e0342a"/><circle cx="24" cy="50" r="1.6" fill="#f0a8c8"/><circle cx="2" cy="46" r="2" fill="#3a8ad8"/></g></svg>
<div class="abs" style="left:45px;top:19px;font:bold 3.9px/6.1px 'Liberation Sans',sans-serif;color:#1a2a9a;white-space:nowrap;text-align:right;width:40px">Петушок, петушок,<br>Золотой гребешок,<br>Масляна головушка,<br>Шёлкова бородушка,<br>Что ты рано встаёшь,<br>Голосисто поёшь,<br>Деткам спать не даёшь?</div>
<div class="abs" style="left:63px;top:70px;font:3px/4px 'Liberation Sans',sans-serif;color:#555;white-space:nowrap">Загадки</div>
</div>
<!-- thumb 12 : lavender, clipped by side panel -->
<div class="abs" style="left:1005px;top:624px;width:8px;height:76px;background:#c9c9f2;overflow:hidden">
<div class="abs" style="left:0;top:0;width:8px;height:4px;background:#dcdcf6"></div>
<div class="abs" style="left:0;top:15px;font:4.6px/6.1px 'Liberation Sans',sans-serif;color:#2a3ad0;white-space:nowrap">Пету<br>Но п<br>Если<br>Мож<br>Если<br>Нече</div>
</div>
<!--THUMBS_END-->
<!--MODAL_END-->
<div id="side" class="abs"></div>
<!--SIDE_START-->
<div class="abs" style="left:1032px;top:138px;width:243px;height:48px;overflow:hidden">
<div class="t" style="left:0;top:1px;font-size:17.1px;line-height:22.2px;color:#0644bd">Мастер - класс для родителей<br>средней группы детского сада</div>
<div class="abs" style="left:183px;top:24px;width:60px;height:24px;background:linear-gradient(90deg,rgba(255,255,255,0),#fff 92%)"></div>
</div>
<div class="t" style="left:1032px;top:185px;font-size:13.2px;font-weight:bold;color:#007a00">infourok.ru</div>
<div class="abs" style="left:1032px;top:201px;width:243px;height:18px;overflow:hidden"><div class="t" style="left:0;top:4px;font-size:12.6px;color:#000">Мастер - класс для родителей средней группы</div><div class="abs" style="left:190px;top:0;width:53px;height:18px;background:linear-gradient(90deg,rgba(255,255,255,0),#fff 84%)"></div></div>
<div class="t" style="left:1032px;top:223px;font-size:12.3px;color:#b9b9b9">Пожаловаться</div>
<!-- yellow open button -->
<div class="abs" style="left:1013px;top:252px;width:285px;height:38px;background:#ffdb4d"></div>
<svg style="left:1032px;top:263px" width="15" height="14" viewBox="0 0 15 14"><path d="M5.3 0H9.7V4.6H13L7.5 10L2 4.6H5.3Z" fill="#1a1a1a"/><rect x="1" y="11.6" width="13" height="2.2" fill="#1a1a1a"/></svg>
<div class="t" style="left:1054.5px;top:263px;font-size:14.2px;color:#000">Открыть&nbsp; 960×720</div>
<svg style="left:1270px;top:269px" width="18" height="5" viewBox="0 0 18 5"><circle cx="2.4" cy="2.4" r="1.9" fill="#1a1a1a"/><circle cx="9" cy="2.4" r="1.9" fill="#1a1a1a"/><circle cx="15.6" cy="2.4" r="1.9" fill="#1a1a1a"/></svg>
<!-- other sizes -->
<svg style="left:1032px;top:300px" width="16" height="15" viewBox="0 0 16 15"><path d="M0 4.2C0 3.4 .6 2.8 1.4 2.8H3.6L5 .6H11L12.4 2.8H14.6C15.4 2.8 16 3.4 16 4.2V14.4H0Z" fill="#1a1a1a"/><circle cx="8" cy="8.6" r="3.2" fill="none" stroke="#fff" stroke-width="1.7"/><path d="M10.2 11L13.6 14.4" stroke="#fff" stroke-width="1.8"/></svg>
<div class="t" style="left:1054.5px;top:301px;font-size:14.25px;color:#000">Другие размеры и похожие</div>
<div class="abs" style="left:1013px;top:327px;width:285px;height:1px;background:#e2e2e2"></div>
<!-- add to collection -->
<svg style="left:1033px;top:338px" width="12" height="16" viewBox="0 0 12 16"><path d="M0 0H12V16L6 11.6L0 16Z" fill="#1a1a1a"/></svg>
<div class="t" style="left:1054.5px;top:339px;font-size:14.2px;color:#000">Добавить в коллекцию</div>
<div class="abs" style="left:1013px;top:365px;width:285px;height:1px;background:#e2e2e2"></div>
<!-- save / share -->
<svg style="left:1032px;top:377px" width="17" height="13" viewBox="0 0 17 13"><path d="M3 5.4C3 2.4 5.2 .4 8.2 .4C10.8 .4 12.4 1.8 13 4C15.2 4.6 16.8 5.8 16.8 7.4C16.8 9.4 14.4 10.6 11.4 10.8C9.4 12.6 5.6 13 3.2 11.6C1.2 10.6 0 9 .2 7.6C.4 6.4 1.6 5.6 3 5.4Z" fill="#1a1a1a"/><path d="M2.4 7.2C5.6 9 10.4 8.6 14.6 6" stroke="#fff" stroke-width="1.3" fill="none"/></svg>
<div class="t" style="left:1054.5px;top:377px;font-size:14.2px;color:#000">Сохранить</div>
<div class="abs" style="left:1140px;top:366px;width:1px;height:37px;background:#e2e2e2"></div>
<svg style="left:1161px;top:376px" width="13" height="15" viewBox="0 0 13 15"><path d="M1 7.6V14H12V7.6" stroke="#1a1a1a" stroke-width="1.9" fill="none"/><path d="M6.5 11V2.4" stroke="#1a1a1a" stroke-width="1.9"/><path d="M2.8 4.6L6.5 .6L10.2 4.6Z" fill="#1a1a1a"/></svg>
<div class="t" style="left:1183.5px;top:377px;font-size:14.15px;color:#000">Поделиться</div>
<div class="abs" style="left:1013px;top:403px;width:285px;height:10px;background:linear-gradient(#dedede,#ececec 30%,#efefef)"></div>
<!-- related -->
<div class="t" style="left:1032px;top:433px;font-size:13.3px;font-weight:bold;color:#333">Связанные картинки</div>
<!--RELATED_START-->
<!-- related 1 : flamingo -->
<div class="abs" style="left:1032px;top:462px;width:120px;height:89px;background:#ecdcbc;overflow:hidden">
<svg style="left:0;top:0" width="25" height="89" viewBox="0 0 25 89"><rect width="25" height="89" fill="#c4b296"/><g filter="url(#b2)"><path d="M0 0H25V40H0Z" fill="#b9a27e"/><path d="M0 66H25V89H0Z" fill="#a9cdee"/><path d="M4 72C10 68 18 70 25 66V80H0Z" fill="#dfeaf4"/><path d="M14 34C18 30 22 32 24 34L20 36C18 40 18 48 16 56C14 64 10 66 8 62C8 52 12 42 14 34Z" fill="#9aa4a8"/><circle cx="18" cy="32" r="1.6" fill="#c83a3a"/><path d="M10 62L9 78M13 62L14 78" stroke="#7a7468" stroke-width="1"/><path d="M2 10L6 60M20 4L22 30M8 0L10 30" stroke="#a08a64" stroke-width="1"/></g></svg>
<div class="abs" style="left:27px;top:2px;font:bold 4.6px/6px 'Liberation Serif',serif;color:#a5141c;white-space:nowrap;text-decoration:underline">ЖИВОТНЫЙ МИР</div>
<div class="abs" style="left:27px;top:10px;width:92px;font:bold 2.75px/3.95px 'Liberation Serif',serif;color:#2a1c10;text-align:center"><span style="text-decoration:underline">РОЗОВЫЙ ФЛАМИНГО</span><br>Одной из самых интересных птиц нашего края является розовый фламинго. Фламинго называют иногда «Огненной птицей» или «Птицей утренней зари», потому что у некоторых птиц действительно ярко-красное или розовое оперение. У этих птиц очень длинные ноги и шея, фламинго по праву можно считать самой длинноногой птицей мира.</div>
<svg style="left:41px;top:43px" width="61" height="45" viewBox="0 0 61 45"><rect width="61" height="45" fill="#7d8a6c"/><g filter="url(#b1)"><path d="M0 0H61V10H0Z" fill="#5c6a48"/><path d="M16 0H40V30H16Z" fill="#aab2a0" opacity=".6"/><path d="M0 32H61V45H0Z" fill="#5a6450"/><path d="M4 14C8 8 16 8 20 14C22 18 24 16 26 14L28 16C26 22 20 24 18 22C14 26 6 24 4 14Z" fill="#f39a86"/><ellipse cx="11" cy="29" rx="10" ry="6" fill="#f08a78"/><path d="M32 16C34 12 38 14 38 18C38 22 36 26 38 28L34 28C32 24 30 20 32 16Z" fill="#e87a6a"/><path d="M40 22C44 14 54 12 60 18V32C54 36 44 34 40 30Z" fill="#f4a08c"/><path d="M26 14L32 16" stroke="#c0303a" stroke-width="1.4"/><path d="M12 34V44M48 34V44M52 34V44" stroke="#d07a6a" stroke-width=".9"/></g></svg>
</div>
<!-- related 2 : poultry -->
<div class="abs" style="left:1156px;top:462px;width:120px;height:89px;background:radial-gradient(ellipse 70% 80% at 62% 45%,#6e98a8 0%,#3f6f82 45%,#173e50 100%);overflow:hidden">
<div class="abs" style="left:30px;top:7px;font:bold 7.4px/9px 'Liberation Sans',sans-serif;color:#d01c2c;white-space:nowrap;transform:skewX(-12deg)">Птицеводство.</div>
<div class="abs" style="left:3px;top:16px;font:4.55px/6.7px 'Liberation Sans',sans-serif;color:#c9d8df;white-space:nowrap">Отрасль занимается разведением<br>сельскохо- зяйственной птицы. Основные<br>продукты: яйцо, мясо, пух, перо</div>
<svg style="left:21px;top:35px" width="44" height="24" viewBox="0 0 44 24"><rect width="44" height="24" fill="#6a8a52"/><g filter="url(#b1)"><path d="M0 0H44V6H0Z" fill="#4a6a3a"/><path d="M2 12C4 8 10 8 12 12L10 20H4Z" fill="#9a3a1e"/><path d="M10 10C14 6 22 8 24 12L22 20H12Z" fill="#2a1c18"/><path d="M16 6C20 4 26 6 28 10L24 14H18Z" fill="#b8481e"/><path d="M28 8C32 4 40 6 42 12L38 18H30Z" fill="#e8dcc0"/><path d="M8 18H30V22H8Z" fill="#e8e0d0"/><path d="M0 21H44V24H0Z" fill="#58703e"/></g></svg>
<svg style="left:80px;top:31px" width="40" height="29" viewBox="0 0 40 29"><rect width="40" height="29" fill="#a89880"/><g filter="url(#b1)"><ellipse cx="18" cy="15" rx="13" ry="11" fill="#2c2826"/><path d="M8 8C12 2 24 2 30 8" stroke="#8a8078" stroke-width="1.6" fill="none"/><path d="M24 12C30 10 36 14 36 20L30 24Z" fill="#e8e6e2"/><circle cx="8" cy="10" r="2" fill="#c8343a"/><path d="M0 24H40V29H0Z" fill="#b8a890"/></g></svg>
<svg style="left:2px;top:61px" width="40" height="27" viewBox="0 0 40 27"><rect width="40" height="27" fill="#5f8a3c"/><g filter="url(#b1)"><path d="M0 0H40V9H0Z" fill="#7a8a5a"/><path d="M0 8H40V11H0Z" fill="#3e6428"/><g fill="#f4f4f0"><path d="M8 14L10 13L11 20H8Z"/><path d="M14 15L16 14L17 22H14Z"/><path d="M20 14L22 13L23 22H20Z"/><path d="M26 15L28 14L29 23H26Z"/><path d="M31 16L33 15L34 23H31Z"/></g></g></svg>
<svg style="left:56px;top:61px" width="38" height="27" viewBox="0 0 38 27"><rect width="38" height="27" fill="#8a9a78"/><g filter="url(#b1)"><path d="M0 0H38V8H0Z" fill="#4a6a38"/><path d="M0 6H38V12H0Z" fill="#a8b8a8"/><g fill="#f6f4ec"><path d="M2 12C4 8 8 10 8 14L14 18V24H2Z"/><path d="M14 12C16 8 20 10 20 14L26 18V25H14Z"/><path d="M26 10C28 6 32 8 32 12L38 16V25H26Z"/></g><path d="M0 23H38V27H0Z" fill="#b89a58"/><path d="M2 11L0 12M14 11L12 12M26 9L24 10" stroke="#e88a2a" stroke-width="1.2"/></g></svg>
<div class="abs" style="left:86px;top:81px;font:bold 5.6px/7px 'Liberation Sans',sans-serif;color:#b8c8d0;white-space:nowrap;opacity:.8">900IWER.ru</div>
</div>
<!-- related 3 & 4 : "Что делать?" -->
<div class="abs rel" style="left:1032px;top:557px">
<div class="abs" style="left:0;top:6px;width:120px;font:bold 6.4px/8px 'Liberation Sans',sans-serif;color:#c8242e;text-align:center;transform:scaleX(.82)">Что делать?</div>
<div class="abs" style="left:7.6px;top:17.6px;font:italic bold 4.3px/6.05px 'Liberation Sans',sans-serif;color:#181818;white-space:nowrap"><span class="bl">▪</span> догонять,<br><span class="bl">▪</span> летать,<br><span class="bl">▪</span> взлетать,<br><span class="bl">▪</span> приземляться,<br><span class="bl">▪</span> опускаться,<br><span class="bl">▪</span> приближаться,<br><span class="bl">▪</span> петушиться<br><span class="bl">▪</span> голосить,<br><span class="bl">▪</span> шагать,</div>
<svg style="left:75px;top:19.5px" width="35" height="26" viewBox="0 0 35 26"><rect width="35" height="26" fill="#5f7a3e"/><g filter="url(#b1)"><path d="M22 0H35V10H26Z" fill="#8a7a68"/><path d="M0 20H35V26H0Z" fill="#8a7a5a"/><path d="M4 8C6 4 10 6 12 10C16 12 22 12 24 16L20 20H10C6 18 4 12 4 8Z" fill="#c8501e"/><path d="M20 12C26 10 32 12 34 18L30 20C26 18 22 18 20 12Z" fill="#1a1614"/><circle cx="6" cy="6" r="1.6" fill="#e02a1a"/></g><rect x=".4" y=".4" width="34.2" height="25.2" fill="none" stroke="#b9ae98" stroke-width=".8"/></svg>
<svg style="left:51px;top:49.5px" width="30" height="30" viewBox="0 0 30 30"><rect width="30" height="30" fill="#8a6a4a"/><g filter="url(#b1)"><path d="M0 0H30V12H0Z" fill="#9ac0dc"/><path d="M22 0H30V14H22Z" fill="#c8d8e0"/><path d="M0 10H30V14H0Z" fill="#7a8a5a"/><path d="M6 10C8 6 14 8 14 14L12 22H6C4 18 4 14 6 10Z" fill="#1c2a26"/><path d="M12 14C16 10 22 12 22 18L18 24H12Z" fill="#c8561e"/><path d="M18 10C20 8 22 10 22 14L20 16Z" fill="#e0781e"/><circle cx="21" cy="9" r="1.5" fill="#d8241a"/><path d="M13 24V28M17 24V28" stroke="#c8a048" stroke-width=".9"/></g><rect x=".4" y=".4" width="29.2" height="29.2" fill="none" stroke="#b9ae98" stroke-width=".8"/></svg>
<svg style="left:0;top:72px" width="60" height="14" viewBox="0 0 60 14"><path d="M0 1L56 14H44Z" fill="#d4e4ee"/><path d="M0 1L44 14H35Z" fill="#0a0a0a"/><path d="M0 1L35 14H0Z" fill="#dcdcdc"/></svg>
</div>
<div class="abs rel" style="left:1156px;top:557px">
<div class="abs" style="left:0;top:6px;width:120px;font:bold 6.4px/8px 'Liberation Sans',sans-serif;color:#c8242e;text-align:center;transform:scaleX(.82)">Что делать?</div>
<div class="abs" style="left:7.6px;top:17.6px;font:italic bold 4.3px/6.05px 'Liberation Sans',sans-serif;color:#181818;white-space:nowrap"><span class="bl">▪</span> догонять,<br><span class="bl">▪</span> летать,<br><span class="bl">▪</span> взлетать,<br><span class="bl">▪</span> приземляться,<br><span class="bl">▪</span> опускаться,<br><span class="bl">▪</span> приближаться,<br><span class="bl">▪</span> петушиться<br><span class="bl">▪</span> голосить,<br><span class="bl">▪</span> шагать,</div>
<svg style="left:75px;top:19.5px" width="35" height="26" viewBox="0 0 35 26"><rect width="35" height="26" fill="#5f7a3e"/><g filter="url(#b1)"><path d="M22 0H35V10H26Z" fill="#8a7a68"/><path d="M0 20H35V26H0Z" fill="#8a7a5a"/><path d="M4 8C6 4 10 6 12 10C16 12 22 12 24 16L20 20H10C6 18 4 12 4 8Z" fill="#c8501e"/><path d="M20 12C26 10 32 12 34 18L30 20C26 18 22 18 20 12Z" fill="#1a1614"/><circle cx="6" cy="6" r="1.6" fill="#e02a1a"/></g><rect x=".4" y=".4" width="34.2" height="25.2" fill="none" stroke="#b9ae98" stroke-width=".8"/></svg>
<svg style="left:51px;top:49.5px" width="30" height="30" viewBox="0 0 30 30"><rect width="30" height="30" fill="#8a6a4a"/><g filter="url(#b1)"><path d="M0 0H30V12H0Z" fill="#9ac0dc"/><path d="M22 0H30V14H22Z" fill="#c8d8e0"/><path d="M0 10H30V14H0Z" fill="#7a8a5a"/><path d="M6 10C8 6 14 8 14 14L12 22H6C4 18 4 14 6 10Z" fill="#1c2a26"/><path d="M12 14C16 10 22 12 22 18L18 24H12Z" fill="#c8561e"/><path d="M18 10C20 8 22 10 22 14L20 16Z" fill="#e0781e"/><circle cx="21" cy="9" r="1.5" fill="#d8241a"/><path d="M13 24V28M17 24V28" stroke="#c8a048" stroke-width=".9"/></g><rect x=".4" y=".4" width="29.2" height="29.2" fill="none" stroke="#b9ae98" stroke-width=".8"/></svg>
<svg style="left:0;top:72px" width="60" height="14" viewBox="0 0 60 14"><path d="M0 1L56 14H44Z" fill="#d4e4ee"/><path d="M0 1L44 14H35Z" fill="#0a0a0a"/><path d="M0 1L35 14H0Z" fill="#dcdcdc"/></svg>
</div>
<!--RELATED_END-->
<!--SIDE_END-->

<!-- ================= TASKBAR ================= -->
<div id="taskbar" class="abs"></div>
<!--TASKBAR_START-->
<div class="abs" style="left:0;top:728px;width:171px;height:40px;background:#000"></div>
<div class="abs" style="left:1195px;top:728px;width:171px;height:40px;background:#000"></div>
<svg style="left:171px;top:728px" width="1024" height="40" viewBox="0 0 1024 40"><defs><filter id="tx" x="0" y="0" width="100%" height="100%" color-interpolation-filters="sRGB"><feTurbulence type="fractalNoise" baseFrequency=".28" numOctaves="2" seed="7"/><feColorMatrix values=".16 0 0 0 .008  .14 0 0 0 .006  .12 0 0 0 .006  0 0 0 0 1"/></filter></defs><rect width="1024" height="40" fill="#17130f"/><rect width="1024" height="40" filter="url(#tx)"/></svg>
<!-- start -->
<svg style="left:16px;top:740px" width="17" height="17" viewBox="0 0 17 17"><path d="M0 2.4L6.9 1.4V8H0ZM7.8 1.3L16.6 0V8H7.8ZM0 8.9H6.9V15.5L0 14.5ZM7.8 8.9H16.6V17L7.8 15.7Z" fill="#fff"/></svg>
<!-- search -->
<svg style="left:63px;top:739px" width="18" height="18" viewBox="0 0 18 18"><circle cx="11.2" cy="6.8" r="5.6" stroke="#fff" stroke-width="1.5" fill="none"/><path d="M7.2 10.8L.8 17.2" stroke="#fff" stroke-width="1.6"/></svg>
<!-- task view -->
<svg style="left:109px;top:741px" width="22" height="14" viewBox="0 0 22 14"><rect x="4.6" y=".7" width="12.6" height="12.6" stroke="#fff" stroke-width="1.3" fill="none"/><path d="M2.6 2.4H.7V11.6H2.6M19.4 2.4H21.3V11.6H19.4" stroke="#fff" stroke-width="1.3" fill="none"/></svg>
<!-- store -->
<svg style="left:159px;top:735px" width="23" height="25" viewBox="0 0 23 25"><path d="M6.4 6.6C6.4 2.8 8.4 .8 10.6 .8C12.8 .8 14.6 2.8 14.6 6.6" stroke="#fff" stroke-width="1.3" fill="none"/><path d="M.4 7.4L22 5V24.6L.4 21.8Z" fill="#fff"/><path d="M4.6 10.4L10 9.8V14.4H4.6ZM11.4 9.6L17.6 9V14.4H11.4ZM4.6 15.6H10V20.4L4.6 19.8ZM11.4 15.6H17.6V21.2L11.4 20.6Z" fill="#0a0a0a"/></svg>
<!-- yandex -->
<svg style="left:208px;top:735px" width="24" height="25" viewBox="0 0 24 25"><path d="M3 .6H13.4L23.6 12.4L13.4 24.4H3C1.6 24.4 .5 23.3 .5 21.8V3.2C.5 1.8 1.6 .6 3 .6Z" fill="#f3f1ee" stroke="#bdb8b0" stroke-width=".8"/></svg>
<div class="t" style="left:212px;top:738px;font:bold 19px 'Liberation Sans',sans-serif;color:#e8140c;transform:scaleX(.8);transform-origin:0 0">Я</div>
<!-- explorer -->
<svg style="left:258px;top:738px" width="22" height="19" viewBox="0 0 22 19"><path d="M0 1.4C0 .8 .5 .4 1 .4H7.6L9.4 2.4H21C21.6 2.4 22 2.8 22 3.4V17H0Z" fill="#e8b638"/><path d="M0 4.4H22V17.6C22 18.2 21.6 18.6 21 18.6H1C.4 18.6 0 18.2 0 17.6Z" fill="#fbd76c"/><path d="M5.6 10.4H16.4V18.6H13.2V14.2H8.8V18.6H5.6Z" fill="#2d8ede"/><path d="M3.4 8.6H18.6V10.6H3.4Z" fill="#54b0f4"/></svg>
<div class="abs" style="left:249px;top:766px;width:40px;height:2px;background:#8ec6ee"></div>
<!-- powerpoint -->
<svg style="left:305px;top:735px" width="26" height="24" viewBox="0 0 26 24"><g filter="url(#b1)"><path d="M4 3L18 .6L24.6 2.6L23.6 21L11 23.4L2 19Z" fill="#f3e8e0"/><path d="M1 6.4L17.6 4L18.6 19.4L3 21.6Z" fill="#e2542a"/><path d="M3 8.4L16 6.4L16.8 17.6L4.6 19.4Z" fill="#fbeee8"/><circle cx="11.6" cy="12.6" r="3.4" fill="#e2542a"/><path d="M5 10.4H8M5 12.6H7.6M5 14.8H8" stroke="#e2542a" stroke-width="1.1"/><path d="M18 2.4L24 3.4L23 19L18.6 19.4Z" fill="#f6a888"/></g></svg>
<!-- word -->
<svg style="left:354px;top:735px" width="25" height="24" viewBox="0 0 25 24"><g filter="url(#b1)"><path d="M6 1.4L20 .6L24 3V21.4L9 23Z" fill="#eef2f8"/><path d="M9 4H22M9 7H22M12 15H22M12 18H22M12 21H20" stroke="#8aa2c8" stroke-width="1.2"/><path d="M.6 5L15 3.4L16 18.6L2 20.6Z" fill="#2a5cae"/><path d="M3.4 8L5.4 16.4L7.6 9.4L9.6 16L11.8 7" stroke="#fff" stroke-width="1.6" fill="none"/></g></svg>
<div class="abs" style="left:347px;top:766px;width:40px;height:2px;background:#8ec6ee"></div>
<!-- red ball + camera -->
<svg style="left:403px;top:735px" width="26" height="25" viewBox="0 0 26 25"><defs><radialGradient id="rb" cx=".38" cy=".3" r=".75"><stop offset="0" stop-color="#fff"/><stop offset=".25" stop-color="#ffb4a8"/><stop offset=".6" stop-color="#e8241a"/><stop offset="1" stop-color="#9a0c08"/></radialGradient></defs><circle cx="11" cy="11" r="10.4" fill="url(#rb)"/><path d="M11 17.4H14L15 16H20L21 17.4H24.4V24.6H11Z" fill="#c8c8c8" stroke="#6a6a6a" stroke-width=".7"/><circle cx="17.6" cy="20.8" r="2.5" fill="#4a4a4a" stroke="#eee" stroke-width=".8"/></svg>
<!-- office -->
<svg style="left:453px;top:736px" width="23" height="23" viewBox="0 0 23 23"><g fill="none" stroke="#f08c1c" stroke-width="2.2"><rect x="1.6" y="1.6" width="8.4" height="8.4"/><rect x="13" y="3.6" width="8" height="8"/><rect x="1.6" y="13.4" width="8" height="8"/><rect x="13" y="13" width="8.4" height="8.4"/></g><path d="M6 6L17 17M17 7.6L6 17.4" stroke="#1a1208" stroke-width="1.4"/><path d="M10 1.6V10H1.6" stroke="#f8b040" stroke-width="2.2" fill="none"/></svg>
<!-- media player -->
<svg style="left:502px;top:737px" width="22" height="21" viewBox="0 0 22 21"><g filter="url(#b1)"><rect x=".6" y="1" width="21" height="19" rx="1.4" fill="#7eb6ea"/><rect x="2.6" y="3" width="17" height="15" fill="#3f86d2"/><rect x="17.4" y="1" width="4.2" height="19" fill="#b8d8f4"/><circle cx="9.4" cy="10.6" r="6.6" fill="#f47c1a"/><circle cx="9.4" cy="10.6" r="5.2" fill="#fb9c2c"/><path d="M7.4 6.8L13.6 10.6L7.4 14.4Z" fill="#fff"/></g></svg>
<!-- edge (active) -->
<div class="abs" style="left:539px;top:728px;width:48px;height:40px;background:#3d3d3d"></div>
<div class="abs" style="left:539px;top:766px;width:48px;height:2px;background:#8ec6ee"></div>
<div class="t" style="left:551px;top:727px;font:bold 34px 'Liberation Sans',sans-serif;color:#1f86e0">e</div>
<!-- tray -->
<svg style="left:1168px;top:744px" width="14" height="8" viewBox="0 0 14 8"><path d="M.8 7.2L7 1L13.2 7.2" stroke="#fff" stroke-width="1.3" fill="none"/></svg>
<svg style="left:1192px;top:744px" width="16" height="9" viewBox="0 0 16 9"><rect x=".6" y=".6" width="12.8" height="7.8" stroke="#fff" stroke-width="1.1" fill="none"/><rect x="14" y="2.6" width="1.6" height="3.8" fill="#fff"/><rect x="2" y="2" width="3" height="5" fill="#fff"/></svg>
<div class="t" style="left:1218px;top:733px;font-size:12px;color:#fff;letter-spacing:-.87px">РУС</div>
<div class="t" style="left:1221.5px;top:750px;font-size:12px;color:#fff;letter-spacing:-1.7px">RU</div>
<div class="t" style="left:1266.5px;top:733px;font-size:12px;color:#fff;letter-spacing:-.74px">19:48</div>
<div class="t" style="left:1253.5px;top:750px;font-size:12px;color:#fff;letter-spacing:-.75px">17.02.2018</div>
<svg style="left:1325px;top:740px" width="17" height="16" viewBox="0 0 17 16"><path d="M.7 .7H15.7V11.7H10.4L8.2 14.6L6 11.7H.7Z" stroke="#fff" stroke-width="1.2" fill="none"/></svg>
<div class="abs" style="left:1361px;top:728px;width:1px;height:40px;background:#8a8a8a"></div>
<!--TASKBAR_END-->
</body>
</html>
